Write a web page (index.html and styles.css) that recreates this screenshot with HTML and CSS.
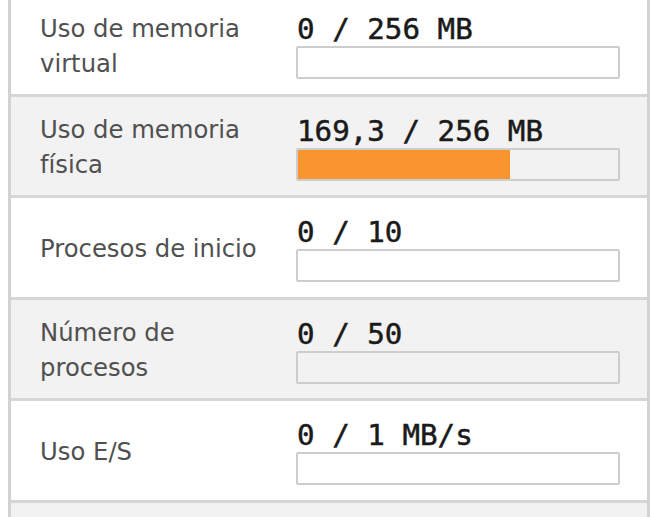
FILE: index.html
```html
<!DOCTYPE html>
<html lang="es">
<head>
<meta charset="utf-8">
<title>Uso de recursos</title>
<link rel="stylesheet" href="styles.css">
</head>
<body>
<div class="panel">
  <div class="row">
    <div class="label">Uso de memoria virtual</div>
    <div class="value">
      <div class="amount">0 / 256 MB</div>
      <div class="bar"><div class="fill" style="width:0%"></div></div>
    </div>
  </div>
  <div class="row alt">
    <div class="label">Uso de memoria física</div>
    <div class="value">
      <div class="amount">169,3 / 256 MB</div>
      <div class="bar"><div class="fill" style="width:66.1%"></div></div>
    </div>
  </div>
  <div class="row">
    <div class="label">Procesos de inicio</div>
    <div class="value">
      <div class="amount">0 / 10</div>
      <div class="bar"><div class="fill" style="width:0%"></div></div>
    </div>
  </div>
  <div class="row alt">
    <div class="label">Número de procesos</div>
    <div class="value">
      <div class="amount">0 / 50</div>
      <div class="bar"><div class="fill" style="width:0%"></div></div>
    </div>
  </div>
  <div class="row">
    <div class="label">Uso E/S</div>
    <div class="value">
      <div class="amount">0 / 1 MB/s</div>
      <div class="bar"><div class="fill" style="width:0%"></div></div>
    </div>
  </div>
  <div class="row alt row-stub"></div>
</div>
</body>
</html>
```

FILE: styles.css
```css
html, body {
  margin: 0;
  padding: 0;
  background: #ffffff;
  overflow: hidden;
}

.panel {
  margin: -5px 0 0 8px;
  width: 642px;
  box-sizing: border-box;
  border-left: 3px solid #d2d2d2;
  border-right: 3px solid #d2d2d2;
}

.row {
  display: grid;
  grid-template-columns: 256px 324px;
  align-items: center;
  height: 101.5px;
  box-sizing: border-box;
  padding-left: 29px;
  border-bottom: 3.5px solid #d6d6d6;
  background: #ffffff;
}

.row.alt {
  background: #f2f2f2;
}

.row-stub {
  height: 40px;
  border-bottom: 0;
}

.label {
  font-family: "DejaVu Sans", Verdana, sans-serif;
  font-size: 24.3px;
  line-height: 35px;
  color: #505050;
  padding-right: 20px;
  padding-top: 3px;
}

.value {
  padding-top: 5px;
}

.amount {
  font-family: "DejaVu Sans Mono", monospace;
  font-size: 29.2px;
  line-height: 30px;
  color: #1a1a1a;
  padding-left: 1px;
  white-space: nowrap;
  -webkit-text-stroke: 0.5px #1a1a1a;
}

.bar {
  margin-top: 2px;
  height: 33px;
  box-sizing: border-box;
  border: 2.5px solid #cdcdcd;
  border-radius: 2px;
  background: transparent;
  overflow: hidden;
}

.fill {
  height: 100%;
  background: #f8952f;
}
```
